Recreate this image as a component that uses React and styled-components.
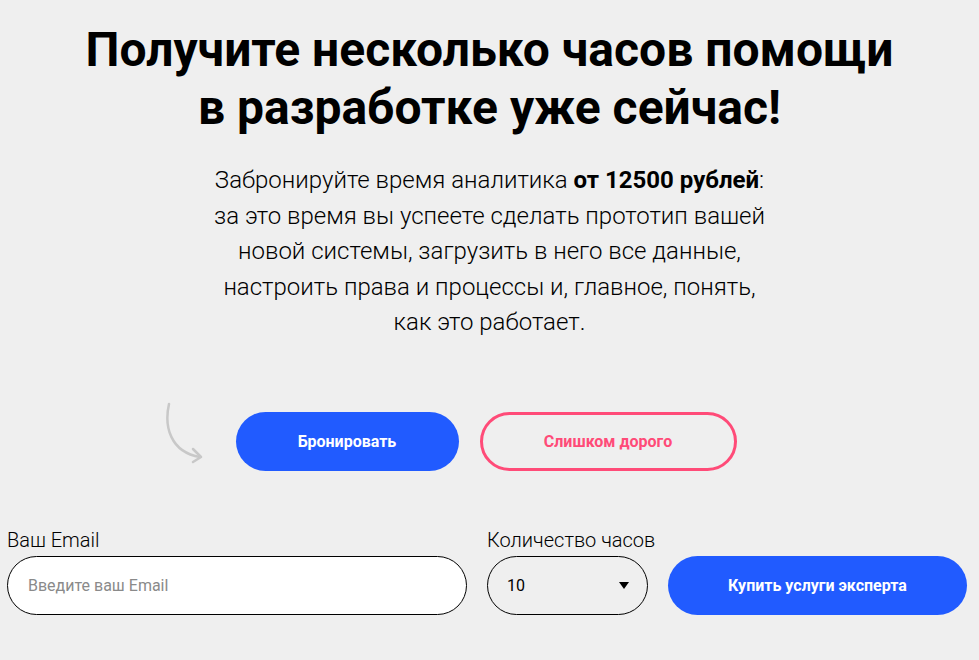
import React from "react";
import styled, { createGlobalStyle } from "styled-components";

const Global = createGlobalStyle`
  body {
    margin: 0;
    background: #efefef;
    font-family: Roboto, "Liberation Sans", sans-serif;
    color: #000;
  }
`;

export default function App() {
  return (
    <>
      <Global />
      <Page>
        <Title>
          Получите несколько часов помощи
          <br />в разработке уже сейчас!
        </Title>
        <Lead>
          Забронируйте время аналитика <b>от 12500 рублей</b>:
          <br />за это время вы успеете сделать прототип вашей
          <br />новой системы, загрузить в него все данные,
          <br />настроить права и процессы и, главное, понять,
          <br />как это работает.
        </Lead>
        <Actions>
          <Arrow viewBox="0 0 44 62" width="44" height="62">
            <path d="M5 2 C0 24 6 50 36 55" fill="none" stroke="#c8c8c8" strokeWidth="2.5" strokeLinecap="round" />
            <path d="M29 47 L37 55 L29 60" fill="none" stroke="#c8c8c8" strokeWidth="2.5" strokeLinecap="round" strokeLinejoin="round" />
          </Arrow>
          <Pill variant="solid">Бронировать</Pill>
          <Pill variant="outline">Слишком дорого</Pill>
        </Actions>
        <Form>
          <Field>
            <Label>Ваш Email</Label>
            <Input placeholder="Введите ваш Email" />
          </Field>
          <Field>
            <Label>Количество часов</Label>
            <Select>
              <span>10</span>
              <Caret />
            </Select>
          </Field>
          <Buy>Купить услуги эксперта</Buy>
        </Form>
      </Page>
    </>
  );
}

const Page = styled.div`
  width: 979px;
  height: 660px;
  display: flex;
  flex-direction: column;
  align-items: center;
  overflow: hidden;
`;

const Title = styled.h1`
  margin: 21px 0 0;
  font-size: 48px;
  line-height: 58px;
  font-weight: 700;
  text-align: center;
`;

const Lead = styled.p`
  margin: 26px 0 0;
  font-size: 24px;
  line-height: 35.5px;
  font-weight: 300;
  text-align: center;
  b {
    font-weight: 700;
  }
`;

const Actions = styled.div`
  position: relative;
  margin-top: 71px;
  display: flex;
  gap: 21px;
  margin-left: -7px;
`;

const Arrow = styled.svg`
  position: absolute;
  left: -72px;
  top: -10px;
`;

const Pill = styled.button`
  height: 59px;
  width: ${(p) => (p.variant === "solid" ? "223px" : "257px")};
  border-radius: 30px;
  font-family: inherit;
  font-size: 16px;
  font-weight: 700;
  cursor: pointer;
  background: ${(p) => (p.variant === "solid" ? "#215bff" : "transparent")};
  color: ${(p) => (p.variant === "solid" ? "#fff" : "#ff4b78")};
  border: ${(p) => (p.variant === "solid" ? "none" : "3px solid #ff4b78")};
`;

const Form = styled.div`
  align-self: stretch;
  margin-top: 57px;
  padding-left: 7px;
  display: grid;
  grid-template-columns: 460px 161px 299px;
  column-gap: 20px;
  align-items: end;
`;

const Field = styled.div`
  display: flex;
  flex-direction: column;
`;

const Label = styled.label`
  font-size: 20px;
  font-weight: 300;
  line-height: 24px;
  margin-bottom: 4px;
  white-space: nowrap;
`;

const Input = styled.input`
  box-sizing: border-box;
  height: 59px;
  border: 1px solid #000;
  border-radius: 30px;
  background: #fff;
  padding: 0 20px;
  font-family: inherit;
  font-size: 16px;
  outline: none;
  &::placeholder {
    color: #8a8a8a;
  }
`;

const Select = styled.div`
  box-sizing: border-box;
  height: 59px;
  border: 1px solid #000;
  border-radius: 30px;
  padding: 0 18px 0 19px;
  display: flex;
  align-items: center;
  justify-content: space-between;
  font-size: 16px;
`;

const Caret = styled.span`
  width: 0;
  height: 0;
  border-left: 5px solid transparent;
  border-right: 5px solid transparent;
  border-top: 7px solid #000;
`;

const Buy = styled.button`
  height: 59px;
  border: none;
  border-radius: 30px;
  background: #215bff;
  color: #fff;
  font-family: inherit;
  font-size: 16px;
  font-weight: 700;
  cursor: pointer;
`;
